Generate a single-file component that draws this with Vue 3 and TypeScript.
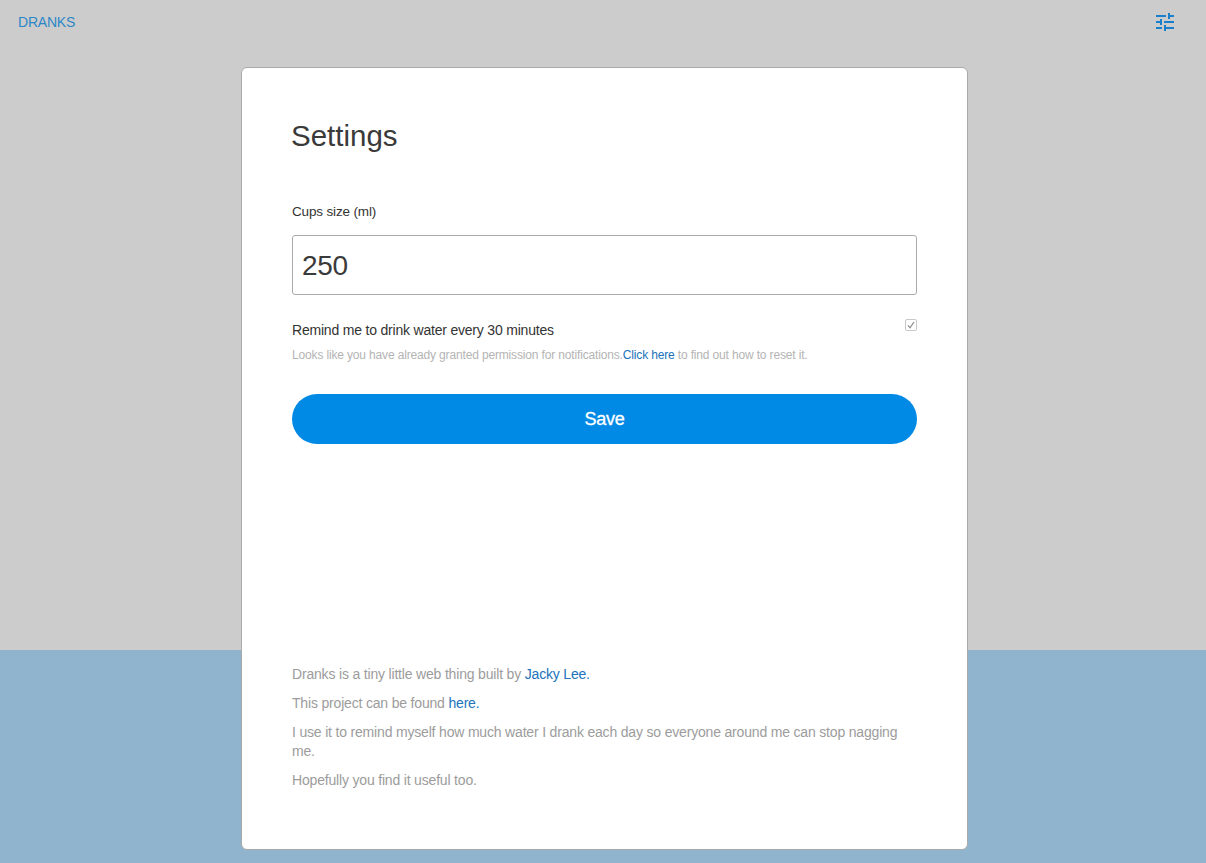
<script setup lang="ts">
import { ref } from 'vue';

const cups = ref(250);
</script>

<template>
  <div class="page">
    <header class="topbar">
      <a href="#" class="brand">DRANKS</a>
      <a href="#" class="tune" aria-label="Settings">
        <svg width="24" height="24" viewBox="0 0 24 24" fill="currentColor">
          <path d="M3 17v2h6v-2H3zM3 5v2h10V5H3zm10 16v-2h8v-2h-8v-2h-2v6h2zM7 9v2H3v2h4v2h2V9H7zm14 4v-2H11v2h10zm-6-4h2V7h4V5h-4V3h-2v6z" />
        </svg>
      </a>
    </header>

    <main class="modal">
      <h1 class="title">Settings</h1>

      <form class="form" @submit.prevent>
        <label class="label" for="cups">Cups size (ml)</label>
        <input id="cups" v-model="cups" class="cups" type="text" />

        <div class="remind">
          <span>Remind me to drink water every 30 minutes</span>
          <span class="check">
            <svg width="8" height="8" viewBox="0 0 8 8" fill="none" stroke="#8c8c8c" stroke-width="1.3">
              <path d="M1 4.4 3 6.8 7 1" />
            </svg>
          </span>
        </div>
        <p class="hint">
          Looks like you have already granted permission for notifications.<a href="#">Click here</a> to find out how to reset it.
        </p>

        <button type="submit" class="save">Save</button>
      </form>

      <section class="about">
        <p>Dranks is a tiny little web thing built by <a href="#">Jacky Lee.</a></p>
        <p>This project can be found <a href="#">here.</a></p>
        <p>I use it to remind myself how much water I drank each day so everyone around me can stop nagging me.</p>
        <p>Hopefully you find it useful too.</p>
      </section>
    </main>
  </div>
</template>

<style>
html,
body {
  margin: 0;
  background: #ccc;
}
</style>

<style scoped>
.page {
  box-sizing: border-box;
  height: 863px;
  overflow: hidden;
  background: linear-gradient(#ccc 650px, #90b3ce 650px);
  font-family: 'Liberation Sans', Arial, sans-serif;
}

.topbar {
  display: flex;
  align-items: center;
  justify-content: space-between;
  height: 44px;
  padding: 0 29px 0 18px;
}

.brand {
  color: #2c87c8;
  font-size: 14px;
  letter-spacing: -0.2px;
  text-decoration: none;
}

.tune {
  display: flex;
  color: #1a7fcb;
}

.modal {
  box-sizing: border-box;
  display: flex;
  flex-direction: column;
  width: 727px;
  height: 783px;
  margin: 23px 0 0 241px;
  padding: 50px 50px 0;
  background: #fff;
  border: 1px solid #aaa;
  border-radius: 6px;
}

.title {
  margin: 0 0 0 -1px;
  color: #3a3a3a;
  font-size: 29.5px;
  font-weight: 400;
  line-height: 36px;
}

.form {
  display: flex;
  flex-direction: column;
  margin-top: 50px;
}

.label {
  color: #333;
  font-size: 13.5px;
  letter-spacing: -0.15px;
  line-height: 16px;
}

.cups {
  box-sizing: border-box;
  width: 100%;
  height: 60px;
  margin-top: 15px;
  padding: 2px 9px 0;
  border: 1px solid #aaa;
  border-radius: 3px;
  outline: none;
  color: #3a3a3a;
  font-family: inherit;
  font-size: 28px;
  letter-spacing: -0.3px;
}

.remind {
  display: flex;
  justify-content: space-between;
  margin-top: 24px;
  color: #333;
  font-size: 14px;
  letter-spacing: -0.2px;
  line-height: 22px;
}

.check {
  box-sizing: border-box;
  display: flex;
  align-items: center;
  justify-content: center;
  width: 12px;
  height: 12px;
  border: 1px solid #c8c8c8;
  border-radius: 2px;
}

.hint {
  margin: 6px 0 0;
  color: #b4b4b4;
  font-size: 12px;
  letter-spacing: -0.155px;
  line-height: 16px;
}

.hint a,
.about a {
  color: #2273bb;
  text-decoration: none;
}

.save {
  height: 50px;
  margin-top: 31px;
  padding-top: 2px;
  border: none;
  border-radius: 25px;
  background: #008ae6;
  color: #fff;
  font-family: inherit;
  font-size: 18px;
  letter-spacing: -0.2px;
  -webkit-text-stroke: 0.3px #fff;
}

.about {
  margin-top: 221px;
  color: #9c9c9c;
  font-size: 14px;
  letter-spacing: -0.18px;
  line-height: 19px;
}

.about p {
  margin: 0 0 10px;
}
</style>
